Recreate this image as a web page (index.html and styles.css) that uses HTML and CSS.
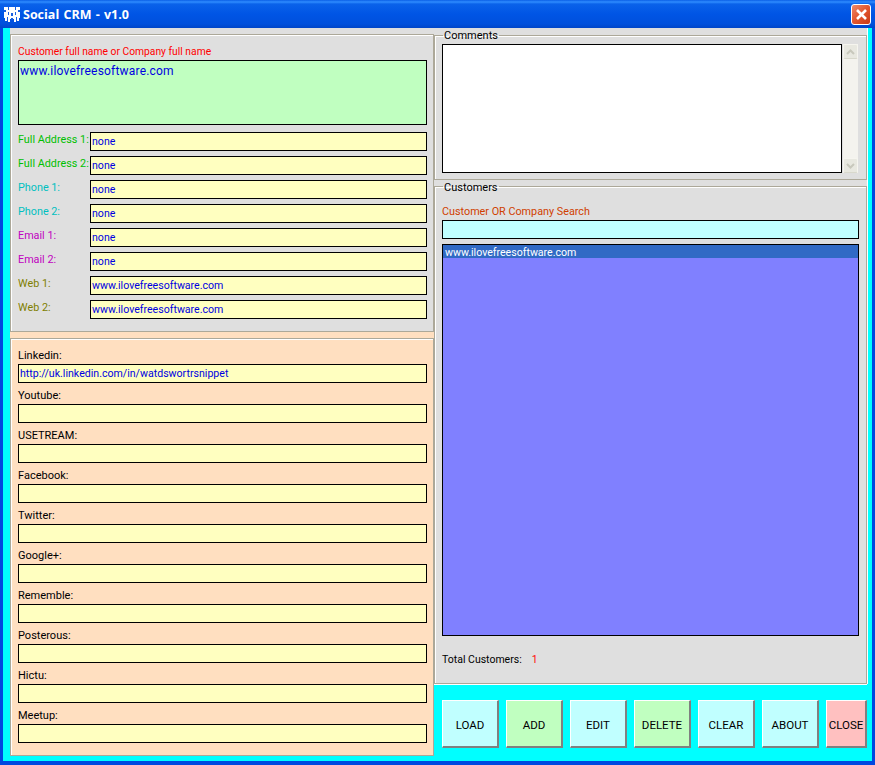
FILE: index.html
```html
<!DOCTYPE html>
<html lang="en">
<head>
    <meta charset="UTF-8">
    <meta name="viewport" content="width=device-width, initial-scale=1.0">
    <title>Social CRM - v1.0</title>
    <link rel="stylesheet" href="styles.css">
</head>
<body>
    <div class="window">
        <div class="titlebar">
            <svg class="app-icon" width="16" height="16" viewBox="0 0 16 16">
                <path fill="#fff" d="M0 1h16v11h-1v3h-3v1h-2v-3H6v3H4v-1H1v-3H0z"/>
                <path fill="#1a5fe0" d="M4 1h1v3H4zM11 1h1v3h-1zM0 4h2v2H0zM14 4h2v2h-2zM4 6h1v3H4zM11 6h1v3h-1zM7 7h2v3H7zM3 11h1v4H3zM12 11h1v4h-1zM7 12h2v2H7z"/>
            </svg>
            <span class="title-text">Social CRM - v1.0</span>
            <button class="close-x">
                <svg width="13" height="13" viewBox="0 0 13 13">
                    <path d="M2 2l9 9M11 2l-9 9" stroke="#fff" stroke-width="2.6" fill="none"/>
                </svg>
            </button>
        </div>

        <div class="client">
            <!-- Left side -->
            <div class="left">
                <div class="info-wrap">
                    <div class="group info-group">
                        <label class="name-label">Customer full name or Company full name</label>
                        <textarea class="name-box" readonly>www.ilovefreesoftware.com</textarea>
                        <div class="row green"><label>Full Address 1:</label><input type="text" value="none" readonly></div>
                        <div class="row green"><label>Full Address 2:</label><input type="text" value="none" readonly></div>
                        <div class="row aqua"><label>Phone 1:</label><input type="text" value="none" readonly></div>
                        <div class="row aqua"><label>Phone 2:</label><input type="text" value="none" readonly></div>
                        <div class="row pink"><label>Email 1:</label><input type="text" value="none" readonly></div>
                        <div class="row pink"><label>Email 2:</label><input type="text" value="none" readonly></div>
                        <div class="row olive"><label>Web 1:</label><input type="text" value="www.ilovefreesoftware.com" readonly></div>
                        <div class="row olive"><label>Web 2:</label><input type="text" value="www.ilovefreesoftware.com" readonly></div>
                    </div>
                </div>
                <div class="group social-group">
                    <div class="social"><label>Linkedin:</label><input type="text" value="http://uk.linkedin.com/in/watdswortrsnippet" readonly></div>
                    <div class="social"><label>Youtube:</label><input type="text" readonly></div>
                    <div class="social"><label>USETREAM:</label><input type="text" readonly></div>
                    <div class="social"><label>Facebook:</label><input type="text" readonly></div>
                    <div class="social"><label>Twitter:</label><input type="text" readonly></div>
                    <div class="social"><label>Google+:</label><input type="text" readonly></div>
                    <div class="social"><label>Rememble:</label><input type="text" readonly></div>
                    <div class="social"><label>Posterous:</label><input type="text" readonly></div>
                    <div class="social"><label>Hictu:</label><input type="text" readonly></div>
                    <div class="social"><label>Meetup:</label><input type="text" readonly></div>
                </div>
            </div>

            <!-- Right side -->
            <div class="right">
                <div class="right-wrap">
                    <fieldset class="comments">
                        <legend>Comments</legend>
                        <div class="comments-inner">
                            <textarea class="comment-box" readonly></textarea>
                            <div class="scrollbar">
                                <div class="scroll-btn">
                                    <svg width="9" height="6" viewBox="0 0 9 6"><path d="M1 5l3.500-3.500L8 5" stroke="#c8c8bc" stroke-width="2" fill="none"/></svg>
                                </div>
                                <div class="scroll-btn">
                                    <svg width="9" height="6" viewBox="0 0 9 6"><path d="M1 1l3.500 3.500L8 1" stroke="#c8c8bc" stroke-width="2" fill="none"/></svg>
                                </div>
                            </div>
                        </div>
                    </fieldset>
                    <fieldset class="customers">
                        <legend>Customers</legend>
                        <label class="search-label">Customer OR Company Search</label>
                        <input class="search-box" type="text">
                        <div class="customer-list">
                            <div class="customer-item">www.ilovefreesoftware.com</div>
                        </div>
                        <div class="total"><span>Total Customers:</span><span class="total-num">1</span></div>
                    </fieldset>
                </div>
                <div class="buttons">
                    <button class="blue-btn">LOAD</button>
                    <button class="green-btn">ADD</button>
                    <button class="blue-btn">EDIT</button>
                    <button class="green-btn">DELETE</button>
                    <button class="blue-btn">CLEAR</button>
                    <button class="blue-btn">ABOUT</button>
                    <button class="red-btn">CLOSE</button>
                </div>
            </div>
        </div>
    </div>
</body>
</html>
```

FILE: styles.css
```css
/* Window frame */
* {
    box-sizing: border-box;
}

body {
    margin: 0;
    font-family: Roboto, "Liberation Sans", sans-serif;
    font-size: 11px;
    overflow: hidden;
}

.window {
    width: 875px;
    height: 765px;
    background-color: #0048e0;
    display: flex;
    flex-direction: column;
    padding-bottom: 4px;
}

.titlebar {
    height: 28px;
    flex-shrink: 0;
    display: flex;
    align-items: center;
    padding: 0 4px 0 4px;
    background: linear-gradient(to bottom, #0a5fe6 0px, #2f8cff 2px, #0a62ea 4px, #0055e5 14px, #0050dc 24px, #0046c8 28px);
}

.app-icon {
    margin-right: 3px;
}

.title-text {
    flex: 1;
    color: #fff;
    font-family: "Open Sans", sans-serif;
    font-size: 12.5px;
    font-weight: bold;
    word-spacing: 1px;
}

.close-x {
    width: 20px;
    height: 21px;
    padding: 0;
    border: 1px solid #fff;
    border-radius: 3px;
    background: linear-gradient(135deg, #ee8a6c, #e2562e 50%, #c83a14);
    display: flex;
    align-items: center;
    justify-content: center;
}

.client {
    flex: 1;
    display: flex;
    margin: 0 3px;
    padding-left: 7px;
    background-color: #00ffff;
}

/* Left column */
.left {
    width: 424px;
    flex-shrink: 0;
    height: 728px;
    display: flex;
    flex-direction: column;
    background-color: #ffdfc0;
}

.info-wrap {
    height: 304px;
    padding-top: 6px;
    background-color: #dfdfdf;
}

.group {
    border: 1px solid #aca899;
    box-shadow: inset 1px 1px 0 #fff;
}

.info-group {
    height: 298px;
    padding: 10px 6px 0 7px;
}

.name-label {
    display: block;
    height: 15px;
    color: #ff0000;
    font-size: 10.3px;
    line-height: 14px;
}

.name-box {
    display: block;
    width: 409px;
    height: 65px;
    margin-bottom: 7px;
    padding: 3px 1px;
    border: 1px solid #000;
    border-radius: 0;
    outline: none;
    resize: none;
    background-color: #c0ffc0;
    color: #0000e0;
    font-family: inherit;
    font-size: 12px;
    letter-spacing: 0.2px;
}

.row {
    height: 24px;
    display: flex;
}

.row label {
    width: 72px;
    flex-shrink: 0;
    white-space: nowrap;
    font-size: 10.8px;
    line-height: 16px;
}

.row input {
    width: 337px;
    height: 19px;
}

input {
    padding: 0 1px;
    border: 1px solid #000;
    border-radius: 0;
    outline: none;
    background-color: #ffffc0;
    color: #0000e0;
    font-family: inherit;
    font-size: 10.6px;
}

.green label {
    color: #00c000;
}

.aqua label {
    color: #00c0c0;
}

.pink label {
    color: #c000c0;
}

.olive label {
    color: #808000;
}

.social-group {
    height: 418px;
    margin-top: 6px;
    padding: 9px 6px 0 7px;
}

.social {
    height: 40px;
}

.social label {
    display: block;
    height: 16px;
    line-height: 16px;
    color: #000;
}

.social input {
    display: block;
    width: 409px;
    height: 19px;
}

/* Right column */
.right {
    width: 438px;
    flex-shrink: 0;
    display: flex;
    flex-direction: column;
}

.right-wrap {
    width: 433px;
    height: 656px;
    padding-top: 1px;
    background-color: #dfdfdf;
    box-shadow: 0 1px 0 #fff, 1px 0 0 #fff;
}

fieldset {
    margin: 0;
    padding: 0;
    border: 1px solid #aca899;
    box-shadow: inset 1px 1px 0 #fff;
    min-width: 0;
}

legend {
    margin-left: 1px;
    padding: 0 1px;
    line-height: 13px;
    color: #000;
}

.comments {
    height: 151px;
    padding: 2px 7px 0 7px;
}

.comments-inner {
    display: flex;
}

.comment-box {
    width: 400px;
    height: 129px;
    border: 1px solid #000;
    border-radius: 0;
    outline: none;
    resize: none;
    background-color: #fff;
}

.scrollbar {
    width: 15px;
    height: 129px;
    margin-left: 1px;
    display: flex;
    flex-direction: column;
    justify-content: space-between;
    background-color: #f4f3ee;
}

.scroll-btn {
    width: 15px;
    height: 15px;
    display: flex;
    align-items: center;
    justify-content: center;
    border: 1px solid #f6f5ef;
    border-bottom-color: #d8d8cc;
    border-radius: 2px;
    background-color: #e8e8e0;
}

.customers {
    height: 505px;
    margin-top: -1px;
    padding: 10px 8px 0 7px;
}

.customers legend {
    padding-top: 2px;
}

.search-label {
    display: block;
    height: 15px;
    color: #d04000;
    font-size: 10.8px;
    line-height: 16px;
}

.search-box {
    display: block;
    width: 417px;
    height: 19px;
    margin-top: 1px;
    background-color: #c0ffff;
}

.customer-list {
    width: 417px;
    height: 392px;
    margin-top: 5px;
    border: 1px solid #000;
    background-color: #8080ff;
}

.customer-item {
    height: 13px;
    padding-left: 2px;
    background-color: #316ac5;
    color: #fff;
    font-size: 10.6px;
    line-height: 15px;
}

.total {
    display: flex;
    margin-top: 16px;
    font-size: 10.5px;
    line-height: 16px;
}

.total-num {
    margin-left: 10px;
    color: #ff0000;
}

/* Bottom buttons */
.buttons {
    display: flex;
    gap: 7px;
    padding: 16px 0 0 8px;
}

.buttons button {
    width: 57px;
    height: 48px;
    padding: 2px 0 0 0;
    border: 2px solid;
    border-color: #fff #808080 #808080 #fff;
    border-width: 1px 2px 2px 1px;
    border-radius: 0;
    font-family: inherit;
    font-size: 11.5px;
    color: #000;
}

.blue-btn {
    background-color: #c0ffff;
}

.green-btn {
    background-color: #c0ffc0;
}

.buttons .red-btn {
    width: 41px;
    background-color: #ffc0c0;
}
```
